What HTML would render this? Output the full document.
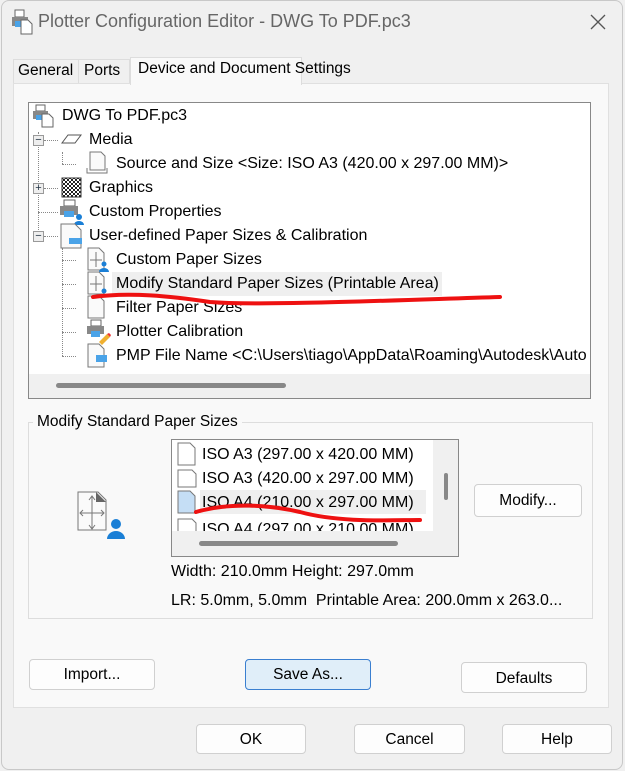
<!DOCTYPE html>
<html><head><meta charset="utf-8"><style>
body{margin:0;width:625px;height:771px;background:#f0f0f0;font-family:"Liberation Sans",sans-serif;font-size:15px;color:#000;position:relative;overflow:hidden}
.a{position:absolute;white-space:nowrap}
.win{position:absolute;left:1px;top:0;width:620px;height:768px;background:#f0f0f0;border:1px solid #c8c8c8;border-radius:8px}
.btn{position:absolute;background:#fdfdfd;border:1px solid #d0d0d0;border-radius:4px;text-align:center;font-size:15.5px;box-sizing:border-box}
.row{position:absolute;font-size:16px;line-height:22px}
.dot{position:absolute;border-color:#888;border-style:dotted;border-width:0}
.pm{position:absolute;width:11px;height:11px;border:1px solid #999;background:#eee;box-sizing:border-box;font-size:11px;line-height:8px;text-align:center;color:#234}
</style></head><body>
<div class="win"></div>
<svg class="a" style="left:11px;top:9px" width="22" height="26"><rect x="4" y="1" width="9" height="7" fill="#fff" stroke="#666"/><rect x="1" y="8" width="16" height="9" fill="#888"/><rect x="4" y="12" width="9" height="6" fill="#4aa3e8"/><path d="M10 11h7l4 4v10h-11z" fill="#fff" stroke="#666"/></svg>
<div class="a" style="left:38px;top:11px;font-size:18px;color:#666">Plotter Configuration Editor - DWG To PDF.pc3</div>
<svg class="a" style="left:590px;top:14px" width="16" height="16"><path d="M1 1L15 15M15 1L1 15" stroke="#555" stroke-width="1.3"/></svg>
<div class="a" style="left:13px;top:59px;width:64px;height:24px;border:1px solid #ddd;border-bottom:none;background:#f0f0f0"></div>
<div class="a" style="left:18px;top:62px;font-size:15.5px">General</div>
<div class="a" style="left:78px;top:59px;width:50px;height:24px;border:1px solid #ddd;border-bottom:none;background:#f0f0f0"></div>
<div class="a" style="left:84px;top:62px;font-size:15.5px">Ports</div>
<div class="a" style="left:13px;top:83px;width:596px;height:625px;background:#f9f9f9;border:1px solid #e0e0e0;box-sizing:border-box"></div>
<div class="a" style="left:130px;top:57px;width:170px;height:27px;border:1px solid #ddd;border-bottom:none;background:#f9f9f9"></div>
<div class="a" style="left:138px;top:60px;font-size:15.5px">Device and Document Settings</div>
<div class="a" style="left:28px;top:102px;width:563px;height:297px;background:#fff;border:1px solid #888;box-sizing:border-box"></div>
<div class="a" style="left:29px;top:374px;width:561px;height:24px;background:#f0f0f0"></div>
<div class="a" style="left:56px;top:383px;width:230px;height:5px;background:#888;border-radius:3px"></div>
<div class="dot" style="left:38px;top:132px;height:104px;border-left-width:1px"></div>
<div class="dot" style="left:62px;top:248px;height:108px;border-left-width:1px"></div>
<div class="dot" style="left:62px;top:152px;height:12px;border-left-width:1px"></div>
<div class="dot" style="left:44px;top:140px;width:14px;border-top-width:1px"></div>
<div class="dot" style="left:62px;top:164px;width:14px;border-top-width:1px"></div>
<div class="dot" style="left:44px;top:188px;width:14px;border-top-width:1px"></div>
<div class="dot" style="left:38px;top:212px;width:20px;border-top-width:1px"></div>
<div class="dot" style="left:44px;top:236px;width:14px;border-top-width:1px"></div>
<div class="dot" style="left:62px;top:260px;width:14px;border-top-width:1px"></div>
<div class="dot" style="left:62px;top:284px;width:14px;border-top-width:1px"></div>
<div class="dot" style="left:62px;top:308px;width:14px;border-top-width:1px"></div>
<div class="dot" style="left:62px;top:332px;width:14px;border-top-width:1px"></div>
<div class="dot" style="left:62px;top:356px;width:14px;border-top-width:1px"></div>
<div class="pm" style="left:33px;top:135px">−</div>
<div class="pm" style="left:33px;top:183px">+</div>
<div class="pm" style="left:33px;top:231px">−</div>
<svg class="a" style="left:32px;top:104px" width="24" height="24"><rect x="4" y="1" width="9" height="6" fill="#fff" stroke="#666"/><rect x="1" y="7" width="15" height="8" fill="#888"/><rect x="4" y="11" width="8" height="5" fill="#4aa3e8"/><path d="M10 10h7l4 4v9h-11z" fill="#fff" stroke="#666"/></svg>
<div class="row" style="left:62px;top:105px">DWG To PDF.pc3</div>
<svg class="a" style="left:61px;top:133px" width="24" height="12"><path d="M7 2h13l-6 8h-13z" fill="#fff" stroke="#555"/></svg>
<div class="row" style="left:89px;top:129px">Media</div>
<svg class="a" style="left:86px;top:151px" width="24" height="24"><path d="M4 1h11l4 4v14h-15z" fill="#fafafa" stroke="#777"/><path d="M1 17v5h20v-5" fill="none" stroke="#777"/></svg>
<div class="row" style="left:116px;top:153px">Source and Size &lt;Size: ISO A3 (420.00 x 297.00 MM)&gt;</div>
<svg class="a" style="left:61px;top:177px" width="22" height="22"><defs><pattern id="ck" width="4" height="4" patternUnits="userSpaceOnUse"><rect width="2" height="2" fill="#222"/><rect x="2" y="2" width="2" height="2" fill="#222"/></pattern></defs><rect x="1" y="1" width="19" height="19" fill="url(#ck)" stroke="#333"/></svg>
<div class="row" style="left:89px;top:177px">Graphics</div>
<svg class="a" style="left:59px;top:199px" width="26" height="26"><rect x="5" y="1" width="11" height="6" fill="#fff" stroke="#666"/><rect x="1" y="7" width="18" height="9" fill="#888"/><rect x="5" y="12" width="10" height="6" fill="#4aa3e8"/><circle cx="20" cy="18" r="3" fill="#1a7fd6"/><path d="M15 26a5 4 0 0 1 10 0z" fill="#1a7fd6"/></svg>
<div class="row" style="left:89px;top:201px">Custom Properties</div>
<svg class="a" style="left:59px;top:222px" width="26" height="28"><path d="M2 2h14l6 6v18h-20z" fill="#fafafa" stroke="#777"/><rect x="10" y="16" width="13" height="6" fill="#4aa3e8"/></svg>
<div class="row" style="left:89px;top:225px">User-defined Paper Sizes &amp; Calibration</div>
<svg class="a" style="left:86px;top:247px" width="24" height="26"><path d="M2 1h11l5 5v17h-16z" fill="#fafafa" stroke="#777"/><path d="M10 5v15M4 13h12" stroke="#777"/><circle cx="18" cy="17" r="2.5" fill="#1a7fd6"/><path d="M13 25a5 4 0 0 1 10 0z" fill="#1a7fd6"/></svg>
<div class="row" style="left:116px;top:249px">Custom Paper Sizes</div>
<svg class="a" style="left:86px;top:271px" width="24" height="26"><path d="M2 1h11l5 5v17h-16z" fill="#fafafa" stroke="#777"/><path d="M10 5v15M4 13h12" stroke="#777"/><circle cx="18" cy="20" r="2.5" fill="#1a7fd6"/></svg>
<div class="a" style="left:112px;top:272px;width:330px;height:24px;background:#efefef"></div>
<div class="row" style="left:116px;top:273px">Modify Standard Paper Sizes (Printable Area)</div>
<svg class="a" style="left:86px;top:295px" width="24" height="26"><path d="M2 1h11l5 5v17h-16z" fill="#fafafa" stroke="#777"/></svg>
<div class="row" style="left:116px;top:297px">Filter Paper Sizes</div>
<svg class="a" style="left:86px;top:319px" width="26" height="26"><rect x="5" y="1" width="10" height="6" fill="#fff" stroke="#666"/><rect x="1" y="7" width="17" height="8" fill="#888"/><rect x="5" y="12" width="9" height="6" fill="#4aa3e8"/><path d="M13 23l8-8 3 3-8 8z" fill="#f0b030"/><path d="M21 15l3 3 1-2-2-2z" fill="#e33"/></svg>
<div class="row" style="left:116px;top:321px">Plotter Calibration</div>
<svg class="a" style="left:86px;top:343px" width="26" height="26"><path d="M2 1h11l5 5v18h-16z" fill="#fafafa" stroke="#777"/><rect x="10" y="12" width="11" height="7" fill="#4aa3e8"/></svg>
<div class="row" style="left:116px;top:345px">PMP File Name &lt;C:\Users\tiago\AppData\Roaming\Autodesk\Auto</div>
<div class="a" style="left:28px;top:422px;width:565px;height:197px;border:1px solid #ddd;box-sizing:border-box"></div>
<div class="a" style="left:33px;top:413px;background:#f9f9f9;padding:0 4px;font-size:15.5px">Modify Standard Paper Sizes</div>
<svg class="a" style="left:76px;top:490px" width="52" height="54"><path d="M2 2h20l8 8v30h-28z" fill="#fafafa" stroke="#777"/><path d="M20 2l10 10h-10z" fill="#666"/><path d="M16 6v33M4 23h24M13 10l3-4 3 4M13 35l3 4 3-4M7 20l-3 3 3 3M25 20l3 3-3 3" stroke="#777" fill="none"/><circle cx="40" cy="34" r="5" fill="#1a7fd6"/><path d="M31 49a9 8 0 0 1 18 0z" fill="#1a7fd6"/></svg>
<div class="a" style="left:171px;top:439px;width:288px;height:118px;background:#fff;border:1px solid #888;box-sizing:border-box;overflow:hidden">
 <div class="a" style="left:28px;top:50px;width:226px;height:24px;background:#efefef"></div>
 <svg class="a" style="left:5px;top:2px" width="20" height="24"><path d="M1 1h12l5 5v17h-17z" fill="#fff" stroke="#777"/></svg>
 <div class="row" style="left:30px;top:4px">ISO A3 (297.00 x 420.00 MM)</div>
 <svg class="a" style="left:5px;top:29px" width="20" height="20"><path d="M1 1h14l4 4v13h-18z" fill="#fff" stroke="#777"/></svg>
 <div class="row" style="left:30px;top:28px">ISO A3 (420.00 x 297.00 MM)</div>
 <svg class="a" style="left:5px;top:50px" width="20" height="24"><path d="M1 1h12l5 5v17h-17z" fill="#c5def5" stroke="#777"/></svg>
 <div class="row" style="left:30px;top:52px">ISO A4 (210.00 x 297.00 MM)</div>
 <svg class="a" style="left:5px;top:78px" width="20" height="20"><path d="M1 1h14l4 4v13h-18z" fill="#fff" stroke="#777"/></svg>
 <div class="row" style="left:30px;top:79px">ISO A4 (297.00 x 210.00 MM)</div>
 <div class="a" style="left:261px;top:0;width:26px;height:116px;background:#f0f0f0"></div>
 <div class="a" style="left:272px;top:33px;width:4px;height:27px;background:#888;border-radius:2px"></div>
 <div class="a" style="left:0;top:91px;width:286px;height:26px;background:#f0f0f0"></div>
 <div class="a" style="left:27px;top:101px;width:199px;height:5px;background:#888;border-radius:3px"></div>
</div>
<div class="btn" style="left:474px;top:484px;width:108px;height:33px;line-height:31px">Modify...</div>
<div class="a" style="left:171px;top:563px;font-size:16px">Width: 210.0mm Height: 297.0mm</div>
<div class="a" style="left:171px;top:592px;font-size:16px">LR: 5.0mm, 5.0mm&nbsp; Printable Area: 200.0mm x 263.0...</div>
<div class="btn" style="left:29px;top:659px;width:126px;height:31px;line-height:29px">Import...</div>
<div class="btn" style="left:245px;top:659px;width:126px;height:31px;line-height:29px;background:#e0eef9;border-color:#3a7fd0">Save As...</div>
<div class="btn" style="left:461px;top:662px;width:126px;height:31px;line-height:31px">Defaults</div>
<div class="btn" style="left:196px;top:724px;width:110px;height:30px;line-height:29px">OK</div>
<div class="btn" style="left:354px;top:724px;width:111px;height:30px;line-height:29px">Cancel</div>
<div class="btn" style="left:502px;top:724px;width:110px;height:30px;line-height:29px">Help</div>
<svg class="a" style="left:0;top:0" width="625" height="771"><path d="M93 297C130 292 170 296 210 302C260 306 400 300 500 297" stroke="#e11" stroke-width="4" fill="none" stroke-linecap="round"/><path d="M196 512C230 502 270 505 300 512C340 523 390 520 420 520" stroke="#e11" stroke-width="4" fill="none" stroke-linecap="round"/></svg>
</body></html>
